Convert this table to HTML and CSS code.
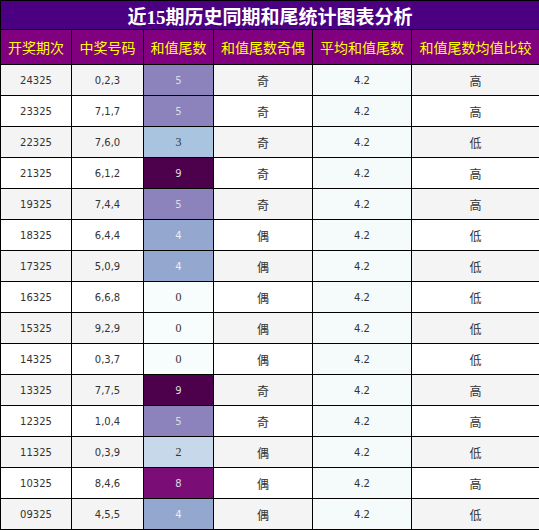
FILE: index.html
```html
<!DOCTYPE html>
<html lang="zh-CN">
  <head>
    <meta charset="UTF-8" />
    <meta name="viewport" content="width=device-width, initial-scale=1.0" />
    <title>近15期历史同期和尾统计图表分析</title>
    <link rel="stylesheet" href="styles.css">
  </head>
  <body>
    <table class="stats-table">
      <colgroup>
        <col class="col-issue" />
        <col class="col-code" />
        <col class="col-tail" />
        <col class="col-parity" />
        <col class="col-avg" />
        <col class="col-compare" />
      </colgroup>
      <thead>
        <tr class="title-row">
          <th colspan="6">近15期历史同期和尾统计图表分析</th>
        </tr>
        <tr class="head-row">
          <th>开奖期次</th>
          <th>中奖号码</th>
          <th>和值尾数</th>
          <th>和值尾数奇偶</th>
          <th>平均和值尾数</th>
          <th>和值尾数均值比较</th>
        </tr>
      </thead>
      <tbody>
        <tr><td>24325</td><td>0,2,3</td><td class="heat h5">5</td><td class="cjk">奇</td><td class="avg">4.2</td><td class="cjk">高</td></tr>
        <tr><td>23325</td><td>7,1,7</td><td class="heat h5">5</td><td class="cjk">奇</td><td class="avg">4.2</td><td class="cjk">高</td></tr>
        <tr><td>22325</td><td>7,6,0</td><td class="heat h3">3</td><td class="cjk">奇</td><td class="avg">4.2</td><td class="cjk">低</td></tr>
        <tr><td>21325</td><td>6,1,2</td><td class="heat h9">9</td><td class="cjk">奇</td><td class="avg">4.2</td><td class="cjk">高</td></tr>
        <tr><td>19325</td><td>7,4,4</td><td class="heat h5">5</td><td class="cjk">奇</td><td class="avg">4.2</td><td class="cjk">高</td></tr>
        <tr><td>18325</td><td>6,4,4</td><td class="heat h4">4</td><td class="cjk">偶</td><td class="avg">4.2</td><td class="cjk">低</td></tr>
        <tr><td>17325</td><td>5,0,9</td><td class="heat h4">4</td><td class="cjk">偶</td><td class="avg">4.2</td><td class="cjk">低</td></tr>
        <tr><td>16325</td><td>6,6,8</td><td class="heat h0">0</td><td class="cjk">偶</td><td class="avg">4.2</td><td class="cjk">低</td></tr>
        <tr><td>15325</td><td>9,2,9</td><td class="heat h0">0</td><td class="cjk">偶</td><td class="avg">4.2</td><td class="cjk">低</td></tr>
        <tr><td>14325</td><td>0,3,7</td><td class="heat h0">0</td><td class="cjk">偶</td><td class="avg">4.2</td><td class="cjk">低</td></tr>
        <tr><td>13325</td><td>7,7,5</td><td class="heat h9">9</td><td class="cjk">奇</td><td class="avg">4.2</td><td class="cjk">高</td></tr>
        <tr><td>12325</td><td>1,0,4</td><td class="heat h5">5</td><td class="cjk">奇</td><td class="avg">4.2</td><td class="cjk">高</td></tr>
        <tr><td>11325</td><td>0,3,9</td><td class="heat h2">2</td><td class="cjk">偶</td><td class="avg">4.2</td><td class="cjk">低</td></tr>
        <tr><td>10325</td><td>8,4,6</td><td class="heat h8">8</td><td class="cjk">偶</td><td class="avg">4.2</td><td class="cjk">高</td></tr>
        <tr><td>09325</td><td>4,5,5</td><td class="heat h4">4</td><td class="cjk">偶</td><td class="avg">4.2</td><td class="cjk">低</td></tr>
      </tbody>
    </table>
  </body>
</html>
```

FILE: styles.css
```css
/* Base */
* {
  box-sizing: border-box;
}

body {
  margin: 0;
  background-color: #ffffff;
  font-family: "DejaVu Sans", "Noto Sans CJK SC", sans-serif;
}

/* Table */
.stats-table {
  width: 539px;
  table-layout: fixed;
  border-collapse: collapse;
}

.col-issue { width: 71px; }
.col-code { width: 72px; }
.col-tail { width: 70px; }
.col-parity { width: 99px; }
.col-avg { width: 99px; }
.col-compare { width: 128px; }

.stats-table th,
.stats-table td {
  border: 1px solid #000;
  padding: 0;
  text-align: center;
  vertical-align: middle;
}

/* Title */
.title-row th {
  height: 29px;
  background-color: #4b0082;
  color: #ffffff;
  font-family: "Liberation Serif", "Noto Sans CJK SC", serif;
  font-size: 19px;
  font-weight: bold;
  letter-spacing: 0;
}

/* Header */
.head-row th {
  height: 35px;
  background-color: #800080;
  color: #ffff00;
  font-family: "Noto Sans CJK SC", sans-serif;
  font-size: 14px;
  font-weight: normal;
}

/* Body rows */
.stats-table td {
  height: 31px;
  color: #333;
  font-size: 10px;
}

.stats-table tbody tr:nth-child(odd) {
  background-color: #f4f4f4;
}

.stats-table tbody tr:nth-child(even) {
  background-color: #ffffff;
}

.stats-table td.cjk {
  font-family: "Noto Sans CJK SC", sans-serif;
  font-size: 12px;
}

.stats-table td.avg {
  background-color: #f5fafa;
}

/* Heat scale for the tail value */
.heat { color: #e6e6e6; }
.stats-table td.h0 { background-color: #f7fcfd; color: #333; font-family: "Liberation Serif", serif; font-size: 12px; }
.stats-table td.h2 { background-color: #c6d8e9; color: #333; font-family: "Liberation Serif", serif; font-size: 12px; }
.stats-table td.h3 { background-color: #a9c4de; color: #333; font-family: "Liberation Serif", serif; font-size: 12px; }
.stats-table td.h4 { background-color: #94a7cf; color: #eeeeee; }
.stats-table td.h5 { background-color: #8c83bd; color: #dddddd; }
.stats-table td.h8 { background-color: #7b0d77; color: #dddddd; }
.stats-table td.h9 { background-color: #4d004b; color: #dddddd; }
```
